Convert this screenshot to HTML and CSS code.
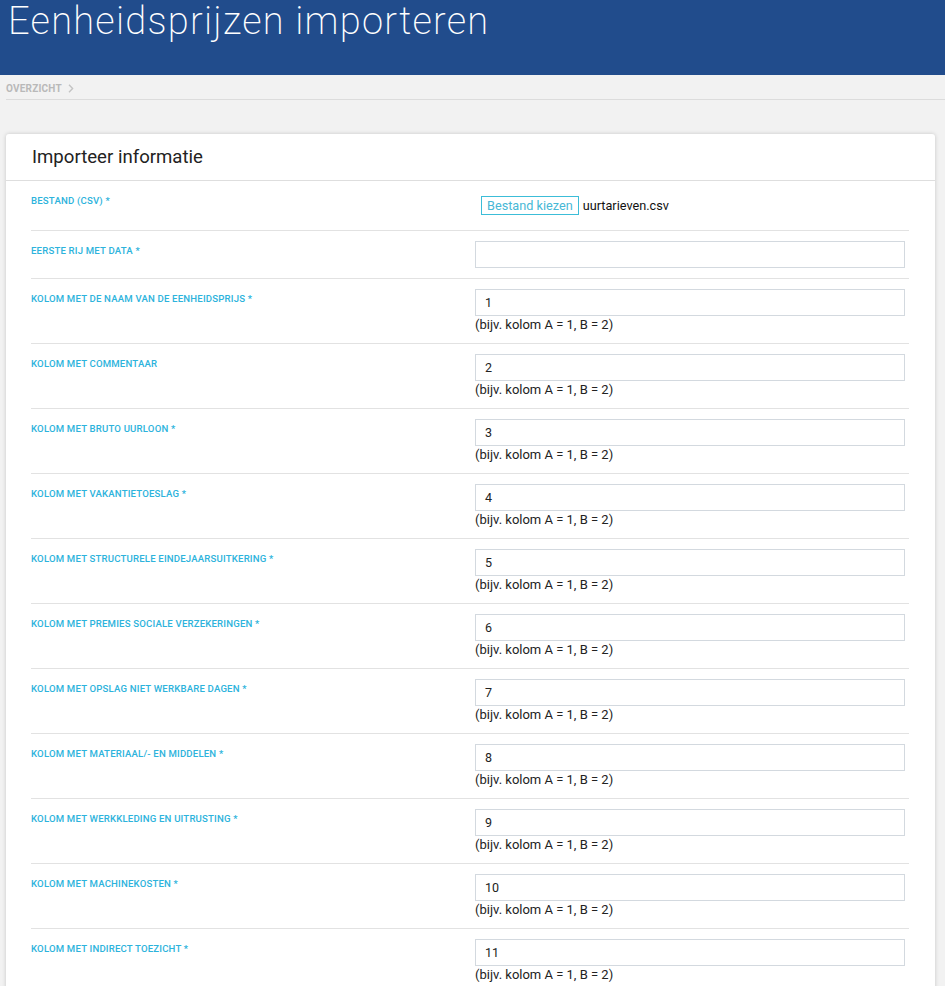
FILE: index.html
```html
<!DOCTYPE html>
<html lang="nl">
<head>
<meta charset="utf-8">
<title>Eenheidsprijzen importeren</title>
<link rel="stylesheet" href="styles.css">
</head>
<body>
<header class="topbar">
  <h1 class="page-title">Eenheidsprijzen importeren</h1>
</header>
<nav class="breadcrumb">
  <span class="crumb">OVERZICHT</span>
  <svg class="chev" width="6" height="9" viewBox="0 0 6 9"><path d="M1 0.8 L4.6 4.5 L1 8.2" fill="none" stroke="#c4c4c4" stroke-width="1.4"/></svg>
</nav>
<main class="card">
  <div class="card-head"><h2 class="card-title">Importeer informatie</h2></div>
  <div class="card-body">
    <div class="row">
      <label class="lbl">Bestand (CSV) *</label>
      <div class="ctl file-ctl"><span class="file-btn">Bestand kiezen</span><span class="file-name">uurtarieven.csv</span></div>
    </div>
    <div class="row">
      <label class="lbl">Eerste rij met data *</label>
      <div class="ctl"><div class="inp"></div></div>
    </div>
    <div class="row">
      <label class="lbl">Kolom met de naam van de eenheidsprijs *</label>
      <div class="ctl"><div class="inp">1</div><div class="hint">(bijv. kolom A = 1, B = 2)</div></div>
    </div>
    <div class="row">
      <label class="lbl">Kolom met commentaar</label>
      <div class="ctl"><div class="inp">2</div><div class="hint">(bijv. kolom A = 1, B = 2)</div></div>
    </div>
    <div class="row">
      <label class="lbl">Kolom met bruto uurloon *</label>
      <div class="ctl"><div class="inp">3</div><div class="hint">(bijv. kolom A = 1, B = 2)</div></div>
    </div>
    <div class="row">
      <label class="lbl">Kolom met vakantietoeslag *</label>
      <div class="ctl"><div class="inp">4</div><div class="hint">(bijv. kolom A = 1, B = 2)</div></div>
    </div>
    <div class="row">
      <label class="lbl">Kolom met structurele eindejaarsuitkering *</label>
      <div class="ctl"><div class="inp">5</div><div class="hint">(bijv. kolom A = 1, B = 2)</div></div>
    </div>
    <div class="row">
      <label class="lbl">Kolom met premies sociale verzekeringen *</label>
      <div class="ctl"><div class="inp">6</div><div class="hint">(bijv. kolom A = 1, B = 2)</div></div>
    </div>
    <div class="row">
      <label class="lbl">Kolom met opslag niet werkbare dagen *</label>
      <div class="ctl"><div class="inp">7</div><div class="hint">(bijv. kolom A = 1, B = 2)</div></div>
    </div>
    <div class="row">
      <label class="lbl">Kolom met materiaal/- en middelen *</label>
      <div class="ctl"><div class="inp">8</div><div class="hint">(bijv. kolom A = 1, B = 2)</div></div>
    </div>
    <div class="row">
      <label class="lbl">Kolom met werkkleding en uitrusting *</label>
      <div class="ctl"><div class="inp">9</div><div class="hint">(bijv. kolom A = 1, B = 2)</div></div>
    </div>
    <div class="row">
      <label class="lbl">Kolom met machinekosten *</label>
      <div class="ctl"><div class="inp">10</div><div class="hint">(bijv. kolom A = 1, B = 2)</div></div>
    </div>
    <div class="row">
      <label class="lbl">Kolom met indirect toezicht *</label>
      <div class="ctl"><div class="inp">11</div><div class="hint">(bijv. kolom A = 1, B = 2)</div></div>
    </div>
  </div>
</main>
</body>
</html>
```
FILE: styles.css
```css
* { box-sizing: border-box; }
html, body { margin: 0; padding: 0; }
body {
  background: #f2f2f2;
  font-family: Roboto, "Liberation Sans", Arial, sans-serif;
  color: #222;
  overflow: hidden;
}
.topbar {
  background: #214c8c;
  height: 75px;
  padding: 0 8px;
}
.page-title {
  margin: 0;
  padding-top: 2px;
  font-weight: 200;
  font-size: 38px;
  line-height: 38px;
  color: #ffffff;
  letter-spacing: 1.25px;
}
.breadcrumb {
  margin: 0 0 0 6px;
  height: 25px;
  border-bottom: 1px solid #dcdcdc;
  display: flex;
  align-items: center;
  gap: 6px;
  padding-top: 3px;
}
.crumb {
  font-size: 10px;
  font-weight: 700;
  color: #b9b9b9;
  letter-spacing: 0.2px;
}
.chev { display: block; }
.card {
  margin: 34px 10px 0 6px;
  background: #fff;
  border-radius: 3px;
  box-shadow: 0 0 4px rgba(0,0,0,0.18);
}
.card-head {
  height: 47px;
  border-bottom: 1px solid #dedede;
  padding: 11px 26px 0;
}
.card-title {
  margin: 0;
  font-size: 18.6px;
  font-weight: 400;
  line-height: 24px;
  color: #222;
}
.card-body {
  padding: 0 26px 0 25px;
}
.row {
  display: grid;
  grid-template-columns: 444px 430px;
  border-bottom: 1px solid #e2e2e2;
  padding: 10px 0;
}
.lbl {
  display: block;
  padding-top: 4px;
  font-size: 9.6px;
  line-height: 11px;
  font-weight: 500;
  text-transform: uppercase;
  color: #2db3dc;
  letter-spacing: 0.18px;
}
.file-ctl {
  display: flex;
  align-items: center;
  margin: 5px 0 5px 6px;
  height: 19px;
}
.file-btn {
  border: 1px solid #3cbdd8;
  color: #47b8d6;
  font-size: 12.7px;
  height: 19px;
  line-height: 17px;
  padding: 0 5px;
  background: #fff;
}
.file-name {
  margin-left: 4px;
  font-size: 12.7px;
  color: #111;
}
.inp {
  height: 27px;
  border: 1px solid #d3d9df;
  font-size: 12.5px;
  line-height: 25px;
  padding: 0 9px;
  color: #222;
}
.hint {
  font-size: 13px;
  line-height: 17px;
  color: #222;
}
```
